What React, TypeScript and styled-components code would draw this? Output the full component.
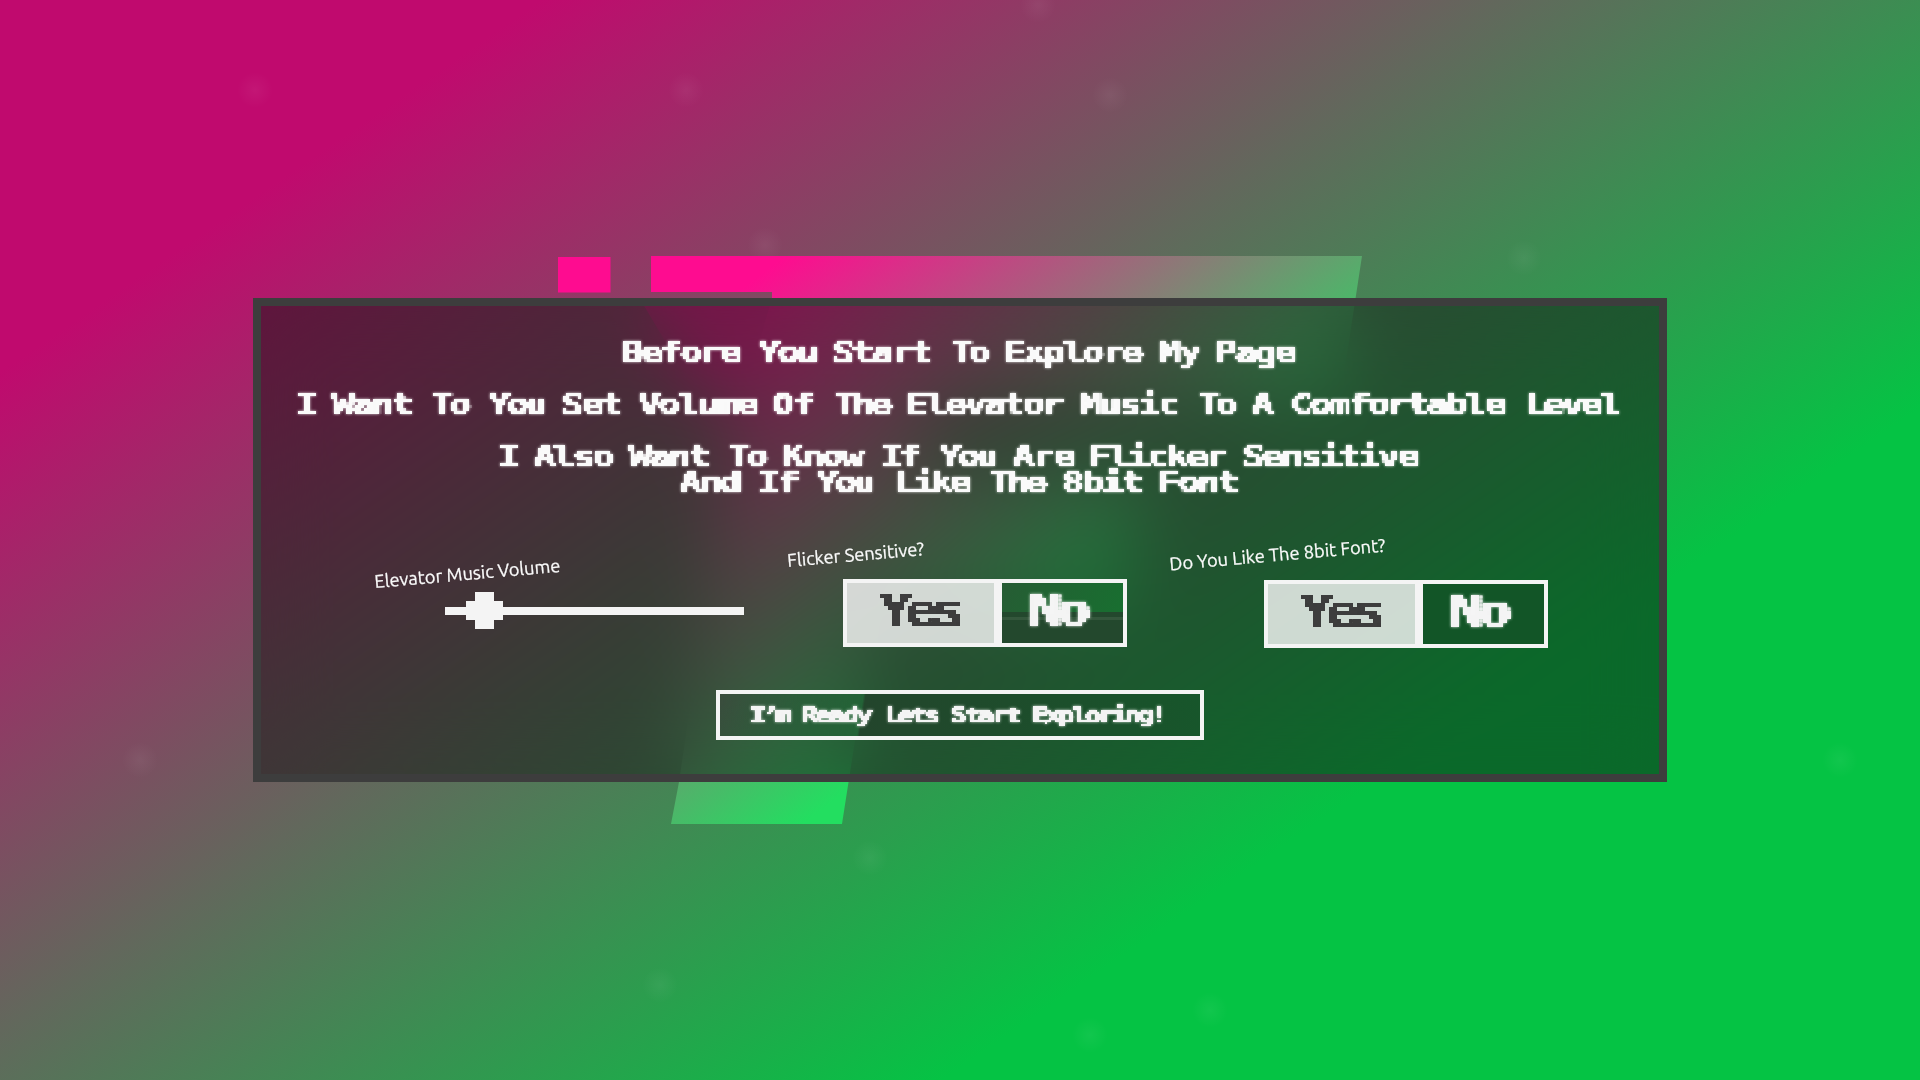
import React from "react";
import styled, { createGlobalStyle } from "styled-components";

const MONO = '"DejaVu Sans Mono", "Liberation Mono", monospace';
const LIGHT = "#f4f4f4";
const DARK = "#3d3d3d";
const STRETCH = 1.3;

const GlobalStyle = createGlobalStyle`
  html, body { margin: 0; height: 100%; overflow: hidden; }
  * { box-sizing: border-box; }
`;

const Page = styled.main`
  position: relative;
  width: 1920px;
  height: 1080px;
  padding: 298px 253px 0;
  overflow: hidden;
  background: linear-gradient(145.5deg, #c00a6e 15.5%, #62685c 43%, #05c344 72%);
  font-family: Ubuntu, "Noto Sans", sans-serif;
`;

const Backdrop = styled.svg`
  position: absolute;
  inset: 0;
`;

const Panel = styled.section`
  position: relative;
  width: 1414px;
  height: 484px;
  border: 8px solid ${DARK};
  background: rgba(16, 16, 16, 0.5);
  background-clip: padding-box;
  backdrop-filter: blur(36px);
  display: flex;
  flex-direction: column;
  align-items: center;
`;

const Intro = styled.header`
  width: 100%;
  height: 202px;
  padding-top: 32px;
  color: #fafafa;
`;

const Line = styled.div<{ $gap?: number }>`
  display: flex;
  justify-content: center;
  height: 26px;
  margin-bottom: ${(p) => p.$gap ?? 0}px;
  filter: drop-shadow(0 0 1.5px rgba(255, 255, 255, 0.8));
`;

const WordBox = styled.span<{ $w: number; $gap: number; $h: number; $cell: number }>`
  display: block;
  flex: none;
  width: ${(p) => p.$w}px;
  height: ${(p) => p.$h}px;
  margin-left: ${(p) => p.$gap}px;
  filter: url(#pixel${(p) => p.$cell});
`;

const WordText = styled.span<{ $size: number; $ls: number; $h: number; $dy: number }>`
  display: block;
  width: max-content;
  font: bold ${(p) => p.$size}px/${(p) => p.$h}px ${MONO};
  letter-spacing: ${(p) => p.$ls}px;
  font-variant-ligatures: none;
  -webkit-text-stroke: 0.35px currentColor;
  white-space: pre;
  transform: translate(-2px, ${(p) => p.$dy}px) scaleX(${STRETCH});
  transform-origin: 0 50%;
`;

type W = [text: string, start: number, end: number];

type WordsProps = { items: W[]; size: number; height: number; cell: number; dy?: number };

/* Fits each monospaced word between its start and end columns. */
function Words({ items, size, height, cell, dy = 0 }: WordsProps) {
  const adv = size * 0.602;
  const ink = size * 0.55;
  return (
    <>
      {items.map(([text, a, b], i) => {
        const w = b - a;
        const n = text.length;
        const ls = n > 1 ? (w / STRETCH - ink) / (n - 1) - adv : 0;
        return (
          <WordBox key={i} $w={w} $h={height} $cell={cell} $gap={i ? a - items[i - 1][2] : 0}>
            <WordText $size={size} $ls={ls} $h={height} $dy={dy}>{text}</WordText>
          </WordBox>
        );
      })}
    </>
  );
}

const Controls = styled.div`
  display: grid;
  grid-template-columns: 488px 382px 1fr;
  width: 100%;
  height: 182px;
`;

const Field = styled.div<{ $left: number; $top: number }>`
  padding: ${(p) => p.$top}px 0 0 ${(p) => p.$left}px;
`;

const Label = styled.div<{ $w: number }>`
  width: ${(p) => p.$w}px;
  height: 24px;
  color: #fafafa;
  font-size: 18.3px;
  line-height: 24px;
  white-space: nowrap;
  -webkit-text-stroke: 0.25px currentColor;
  transform: rotate(-5deg);
`;

const Slider = styled.div`
  width: 299px;
  height: 37px;
  margin: 7px 0 0 71px;
  display: flex;
  align-items: center;
  background: linear-gradient(${LIGHT}, ${LIGHT}) center / 100% 8px no-repeat;
`;

const Thumb = styled.div`
  width: 37px;
  height: 37px;
  margin-left: 21px;
  background:
    linear-gradient(${LIGHT}, ${LIGHT}) center / 19px 37px no-repeat,
    linear-gradient(${LIGHT}, ${LIGHT}) center / 37px 19px no-repeat;
`;

const Toggle = styled.div<{ $left: number; $top: number }>`
  display: flex;
  width: 284px;
  height: 68px;
  margin: ${(p) => p.$top}px 0 0 ${(p) => p.$left}px;
  border: 4px solid ${LIGHT};
`;

const Yes = styled.div`
  width: 147px;
  padding: 7px 0 0 33px;
  color: ${DARK};
  background: rgba(244, 244, 244, 0.83);
`;

const No = styled.div<{ $bg: string }>`
  flex: 1;
  padding: 7px 0 0 28px;
  border-left: 8px solid ${LIGHT};
  color: ${LIGHT};
  background: ${(p) => p.$bg};
`;

const Glow = styled.span`
  display: flex;
  filter: drop-shadow(0 0 1.5px rgba(255, 255, 255, 0.8));
`;

const Ready = styled.button`
  display: flex;
  width: 488px;
  height: 50px;
  padding: 8px 0 0 31px;
  border: 4px solid ${LIGHT};
  color: ${LIGHT};
  background: linear-gradient(99deg, rgba(61, 61, 61, 0.3), rgba(35, 100, 55, 0.9) 29.5%, #23452c 30%, #17562b);
`;

const LINES: { gap: number; words: W[] }[] = [
  { gap: 26, words: [["Before", 621, 740], ["You", 758, 817], ["Start", 832, 931], ["To", 951, 989], ["Explore", 1004, 1142], ["My", 1158, 1200], ["Page", 1215, 1295]] },
  { gap: 26, words: [["I", 298, 318], ["Want", 334, 414], ["To", 433, 472], ["You", 490, 548], ["Set", 563, 624], ["Volume", 640, 759], ["Of", 774, 816], ["The", 836, 893], ["Elevator", 908, 1065], ["Music", 1081, 1181], ["To", 1200, 1238], ["A", 1253, 1277], ["Comfortable", 1292, 1507], ["Level", 1526, 1622]] },
  { gap: 0, words: [["I", 500, 520], ["Also", 535, 615], ["Want", 631, 711], ["To", 730, 769], ["Know", 784, 864], ["If", 883, 922], ["You", 941, 999], ["Are", 1014, 1076], ["Flicker", 1091, 1228], ["Sensitive", 1244, 1420]] },
  { gap: 0, words: [["And", 679, 740], ["If", 758, 798], ["You", 816, 874], ["Like", 893, 970], ["The", 989, 1046], ["8bit", 1062, 1142], ["Font", 1158, 1238]] },
];

const READY: W[] = [["I’m", 750, 791], ["Ready", 802, 872], ["Lets", 885, 939], ["Start", 951, 1021], ["Exploring!", 1032, 1167]];

const SPECKS = [[1038, 5], [686, 90], [765, 245], [1524, 258], [870, 858], [1090, 1035], [660, 985], [1840, 760], [140, 760], [255, 90], [1110, 95], [1210, 1010]];

/* Samples one pixel per cell and grows it back to fill the cell. */
function PixelFilter({ cell, grow, offsets }: { cell: number; grow: number; offsets: number[][] }) {
  return (
    <filter id={`pixel${cell}`} x="-12" y="-12" width="300" height="72" filterUnits="userSpaceOnUse" primitiveUnits="userSpaceOnUse" colorInterpolationFilters="sRGB">
      <feFlood x={cell > 2 ? 1 : 0} y={cell > 2 ? 1 : 0} width="1" height="1" floodColor="#000" result="dot" />
      <feOffset in="dot" x="0" y="0" width={cell} height={cell} />
      <feTile x="-12" y="-12" width="300" height="72" result="grid" />
      <feComponentTransfer in="SourceGraphic" result="hard"><feFuncA type="linear" slope="5" intercept="-1.6" /></feComponentTransfer>
      <feComposite in="hard" in2="grid" operator="in" result={grow ? "s" : "m"} />
      {grow > 0 && <feMorphology in="s" operator="dilate" radius={grow} result="m" />}
      {offsets.map(([x, y], i) => <feOffset key={i} in="m" dx={x} dy={y} result={`m${i}`} />)}
      <feMerge>
        <feMergeNode in="m" />
        {offsets.map((_, i) => <feMergeNode key={i} in={`m${i}`} />)}
      </feMerge>
    </filter>
  );
}

const QUAD = [[1, 0], [0, 1], [1, 1]];

function YesNo({ left, top, bg }: { left: number; top: number; bg: string }) {
  return (
    <Toggle $left={left} $top={top}>
      <Yes><Words items={[["Yes", 880, 964]]} size={44} height={40} cell={4} /></Yes>
      <No $bg={bg}><Glow><Words items={[["No", 1030, 1090]]} size={44} height={40} cell={4} /></Glow></No>
    </Toggle>
  );
}

export default function App() {
  return (
    <Page>
      <GlobalStyle />
      <Backdrop width="1920" height="1080" aria-hidden="true">
        <defs>
          <linearGradient id="mark" gradientUnits="userSpaceOnUse" x1="785" y1="256" x2="1064" y2="628">
            <stop offset="0" stopColor="#fe0c90" />
            <stop offset="1" stopColor="#23de60" />
          </linearGradient>
          <radialGradient id="speck">
            <stop offset="0" stopColor="#fff" stopOpacity=".05" />
            <stop offset="1" stopColor="#fff" stopOpacity="0" />
          </radialGradient>
          <PixelFilter cell={2} grow={0} offsets={QUAD} />
          <PixelFilter cell={3} grow={1} offsets={[]} />
          <PixelFilter cell={4} grow={1} offsets={QUAD} />
        </defs>
        {SPECKS.map(([x, y], i) => <circle key={i} cx={x} cy={y} r="18" fill="url(#speck)" />)}
        <rect x="558" y="257" width="52.5" height="35.5" fill="#fe0c90" />
        <path d="M640 299H780V400H700Z" fill="#fe0c90" opacity=".7" />
        <path d="M651 256H1362L1340 400H930L917 470H1150L1120 612H875L842 824H671L679 782L728 450L772 298V292H651Z" fill="url(#mark)" />
      </Backdrop>
      <Panel>
        <Intro>
          {LINES.map((l, i) => (
            <Line key={i} $gap={l.gap}><Words items={l.words} size={29} height={26} cell={3} dy={1} /></Line>
          ))}
        </Intro>
        <Controls>
          <Field $left={113} $top={53}>
            <Label $w={185}>Elevator Music Volume</Label>
            <Slider><Thumb /></Slider>
          </Field>
          <Field $left={38} $top={34}>
            <Label $w={138}>Flicker Sensitive?</Label>
            <YesNo left={56} top={13} bg="linear-gradient(120deg, #265c34, #186f30) 0 0 / 100% 29px no-repeat, linear-gradient(#34573c, #34573c) 0 34px / 100% 3px no-repeat, #23482d" />
          </Field>
          <Field $left={38} $top={34}>
            <Label $w={216}>Do You Like The 8bit Font?</Label>
            <YesNo left={95} top={14} bg="#125527" />
          </Field>
        </Controls>
        <Ready><Glow><Words items={READY} size={21.5} height={24} cell={2} dy={1} /></Glow></Ready>
      </Panel>
    </Page>
  );
}
